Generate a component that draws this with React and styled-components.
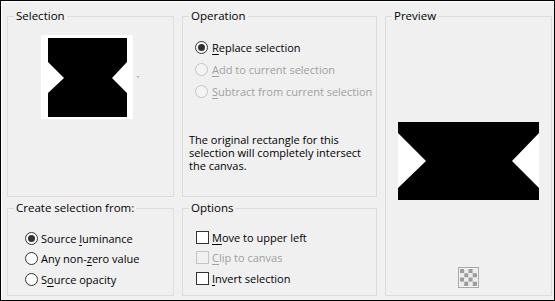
import React from "react";
import styled, { createGlobalStyle } from "styled-components";

const Global = createGlobalStyle`
  html, body { margin: 0; padding: 0; background: #f0f0f0; }
  * { box-sizing: border-box; }
`;

const Window = styled.div`
  width: 555px;
  height: 301px;
  border: 1px solid #000;
  box-shadow: inset 1px 1px 0 #fff;
  background: #f0f0f0;
  display: grid;
  grid-template-columns: 167px 195px 167px;
  grid-template-rows: 188px 95px;
  column-gap: 8px;
  row-gap: 4px;
  padding: 8px 0 0 6px;
  font-family: "Open Sans", "Noto Sans", sans-serif;
  font-size: 11px;
  color: #000;
`;

const Group = styled.fieldset`
  margin: 0;
  padding: 0;
  min-width: 0;
  border: 1px solid #dcdcdc;
  display: flex;
  flex-direction: column;
  grid-column: ${(p) => p.$col};
  grid-row: ${(p) => p.$row};
  align-items: ${(p) => (p.$center ? "center" : "stretch")};
`;

const Legend = styled.legend`
  margin-left: 6px;
  padding: 0 2px;
  line-height: 14px;
  font-size: 11.5px;
  align-self: flex-start;
`;

const ThumbRow = styled.div`
  display: flex;
  align-items: center;
  gap: 3px;
  margin: 12px 0 0 33px;
`;

const Arrow = styled.span`
  width: 0;
  height: 0;
  border-left: 2px solid transparent;
  border-right: 2px solid transparent;
  border-top: 2px solid #c0c0c0;
`;

const OptionList = styled.div`
  display: flex;
  flex-direction: column;
  padding: ${(p) => p.$pad};
`;

const Row = styled.label`
  display: flex;
  align-items: center;
  gap: ${(p) => p.$gap || 4}px;
  height: ${(p) => p.$h}px;
  color: ${(p) => (p.$disabled ? "#a0a0a0" : "#000")};
  white-space: nowrap;
`;

const RadioDot = styled.span`
  width: 13px;
  height: 13px;
  border-radius: 50%;
  border: 1px solid ${(p) => (p.$disabled ? "#c4c4c4" : "#333")};
  background: ${(p) => (p.$disabled ? "#f4f4f4" : "#fff")};
  display: flex;
  align-items: center;
  justify-content: center;
  flex: none;
  &::after {
    content: "";
    width: 7px;
    height: 7px;
    border-radius: 50%;
    background: #333;
    display: ${(p) => (p.$checked ? "block" : "none")};
  }
`;

const Box = styled.span`
  width: 13px;
  height: 13px;
  border: 1px solid ${(p) => (p.$disabled ? "#c4c4c4" : "#333")};
  background: ${(p) => (p.$disabled ? "#f0f0f0" : "#fff")};
  flex: none;
`;

const Key = styled.u`
  text-decoration: underline;
  text-underline-offset: 2px;
`;

const Note = styled.p`
  margin: 31px 0 0 6px;
  line-height: 13px;
  white-space: nowrap;
`;

const PreviewImage = styled.div`
  margin-top: 99px;
  display: flex;
`;

const Checker = styled.div`
  margin-top: 67px;
  display: flex;
`;

function Radio({ checked, disabled, h, gap, children }) {
  return (
    <Row $h={h} $gap={gap} $disabled={disabled}>
      <RadioDot $checked={checked} $disabled={disabled} />
      <span>{children}</span>
    </Row>
  );
}

function Check({ disabled, h, gap, children }) {
  return (
    <Row $h={h} $gap={gap} $disabled={disabled}>
      <Box $disabled={disabled} />
      <span>{children}</span>
    </Row>
  );
}

export default function App() {
  return (
    <>
      <Global />
      <Window>
        <Group $col="1" $row="1">
          <Legend>Selection</Legend>
          <ThumbRow>
            <svg width="92" height="84" viewBox="0 0 92 84">
              <rect width="92" height="84" fill="#fff" />
              <polygon
                points="7,3 86,3 86,27 71,43 86,58 86,82 7,82 7,58 23,43 7,27"
                fill="#000"
              />
            </svg>
            <Arrow />
          </ThumbRow>
        </Group>

        <Group $col="2" $row="1">
          <Legend>Operation</Legend>
          <OptionList $pad="13px 0 0 12px">
            <Radio h={22} checked>
              <Key>R</Key>eplace selection
            </Radio>
            <Radio h={22} disabled>
              <Key>A</Key>dd to current selection
            </Radio>
            <Radio h={22} disabled>
              <Key>S</Key>ubtract from current selection
            </Radio>
          </OptionList>
          <Note>
            The original rectangle for this
            <br />
            selection will completely intersect
            <br />
            the canvas.
          </Note>
        </Group>

        <Group $col="3" $row="1 / span 2" $center>
          <Legend>Preview</Legend>
          <PreviewImage>
            <svg width="141" height="78" viewBox="0 0 141 78">
              <rect width="141" height="78" fill="#fff" />
              <polygon
                points="0,0 141,0 141,11 114,39 141,66 141,78 0,78 0,66 28,39 0,11"
                fill="#000"
              />
            </svg>
          </PreviewImage>
          <Checker>
            <svg width="21" height="21" viewBox="0 0 21 21">
              <rect x="0.5" y="0.5" width="20" height="20" fill="#f4f4f4" stroke="#a8a8a8" />
              {[0, 1, 2, 3].map((r) =>
                [0, 1, 2, 3].map((c) => (
                  <rect
                    key={`${r}-${c}`}
                    x={2 + c * 4.25}
                    y={2 + r * 4.25}
                    width="4.25"
                    height="4.25"
                    fill={(r + c) % 2 === 0 ? "#9c9c9c" : "#ececec"}
                  />
                ))
              )}
            </svg>
          </Checker>
        </Group>

        <Group $col="1" $row="2">
          <Legend>Create selection from:</Legend>
          <OptionList $pad="13px 0 0 17px">
            <Radio h={20.5} gap={3} checked>
              Source <Key>l</Key>uminance
            </Radio>
            <Radio h={20.5} gap={3}>
              Any non-<Key>z</Key>ero value
            </Radio>
            <Radio h={20.5} gap={3}>
              S<Key>o</Key>urce opacity
            </Radio>
          </OptionList>
        </Group>

        <Group $col="2" $row="2">
          <Legend>Options</Legend>
          <OptionList $pad="12px 0 0 13px">
            <Check h={20.5} gap={3}>
              <Key>M</Key>ove to upper left
            </Check>
            <Check h={20.5} gap={3} disabled>
              <Key>C</Key>lip to canvas
            </Check>
            <Check h={20.5} gap={3}>
              <Key>I</Key>nvert selection
            </Check>
          </OptionList>
        </Group>
      </Window>
    </>
  );
}
